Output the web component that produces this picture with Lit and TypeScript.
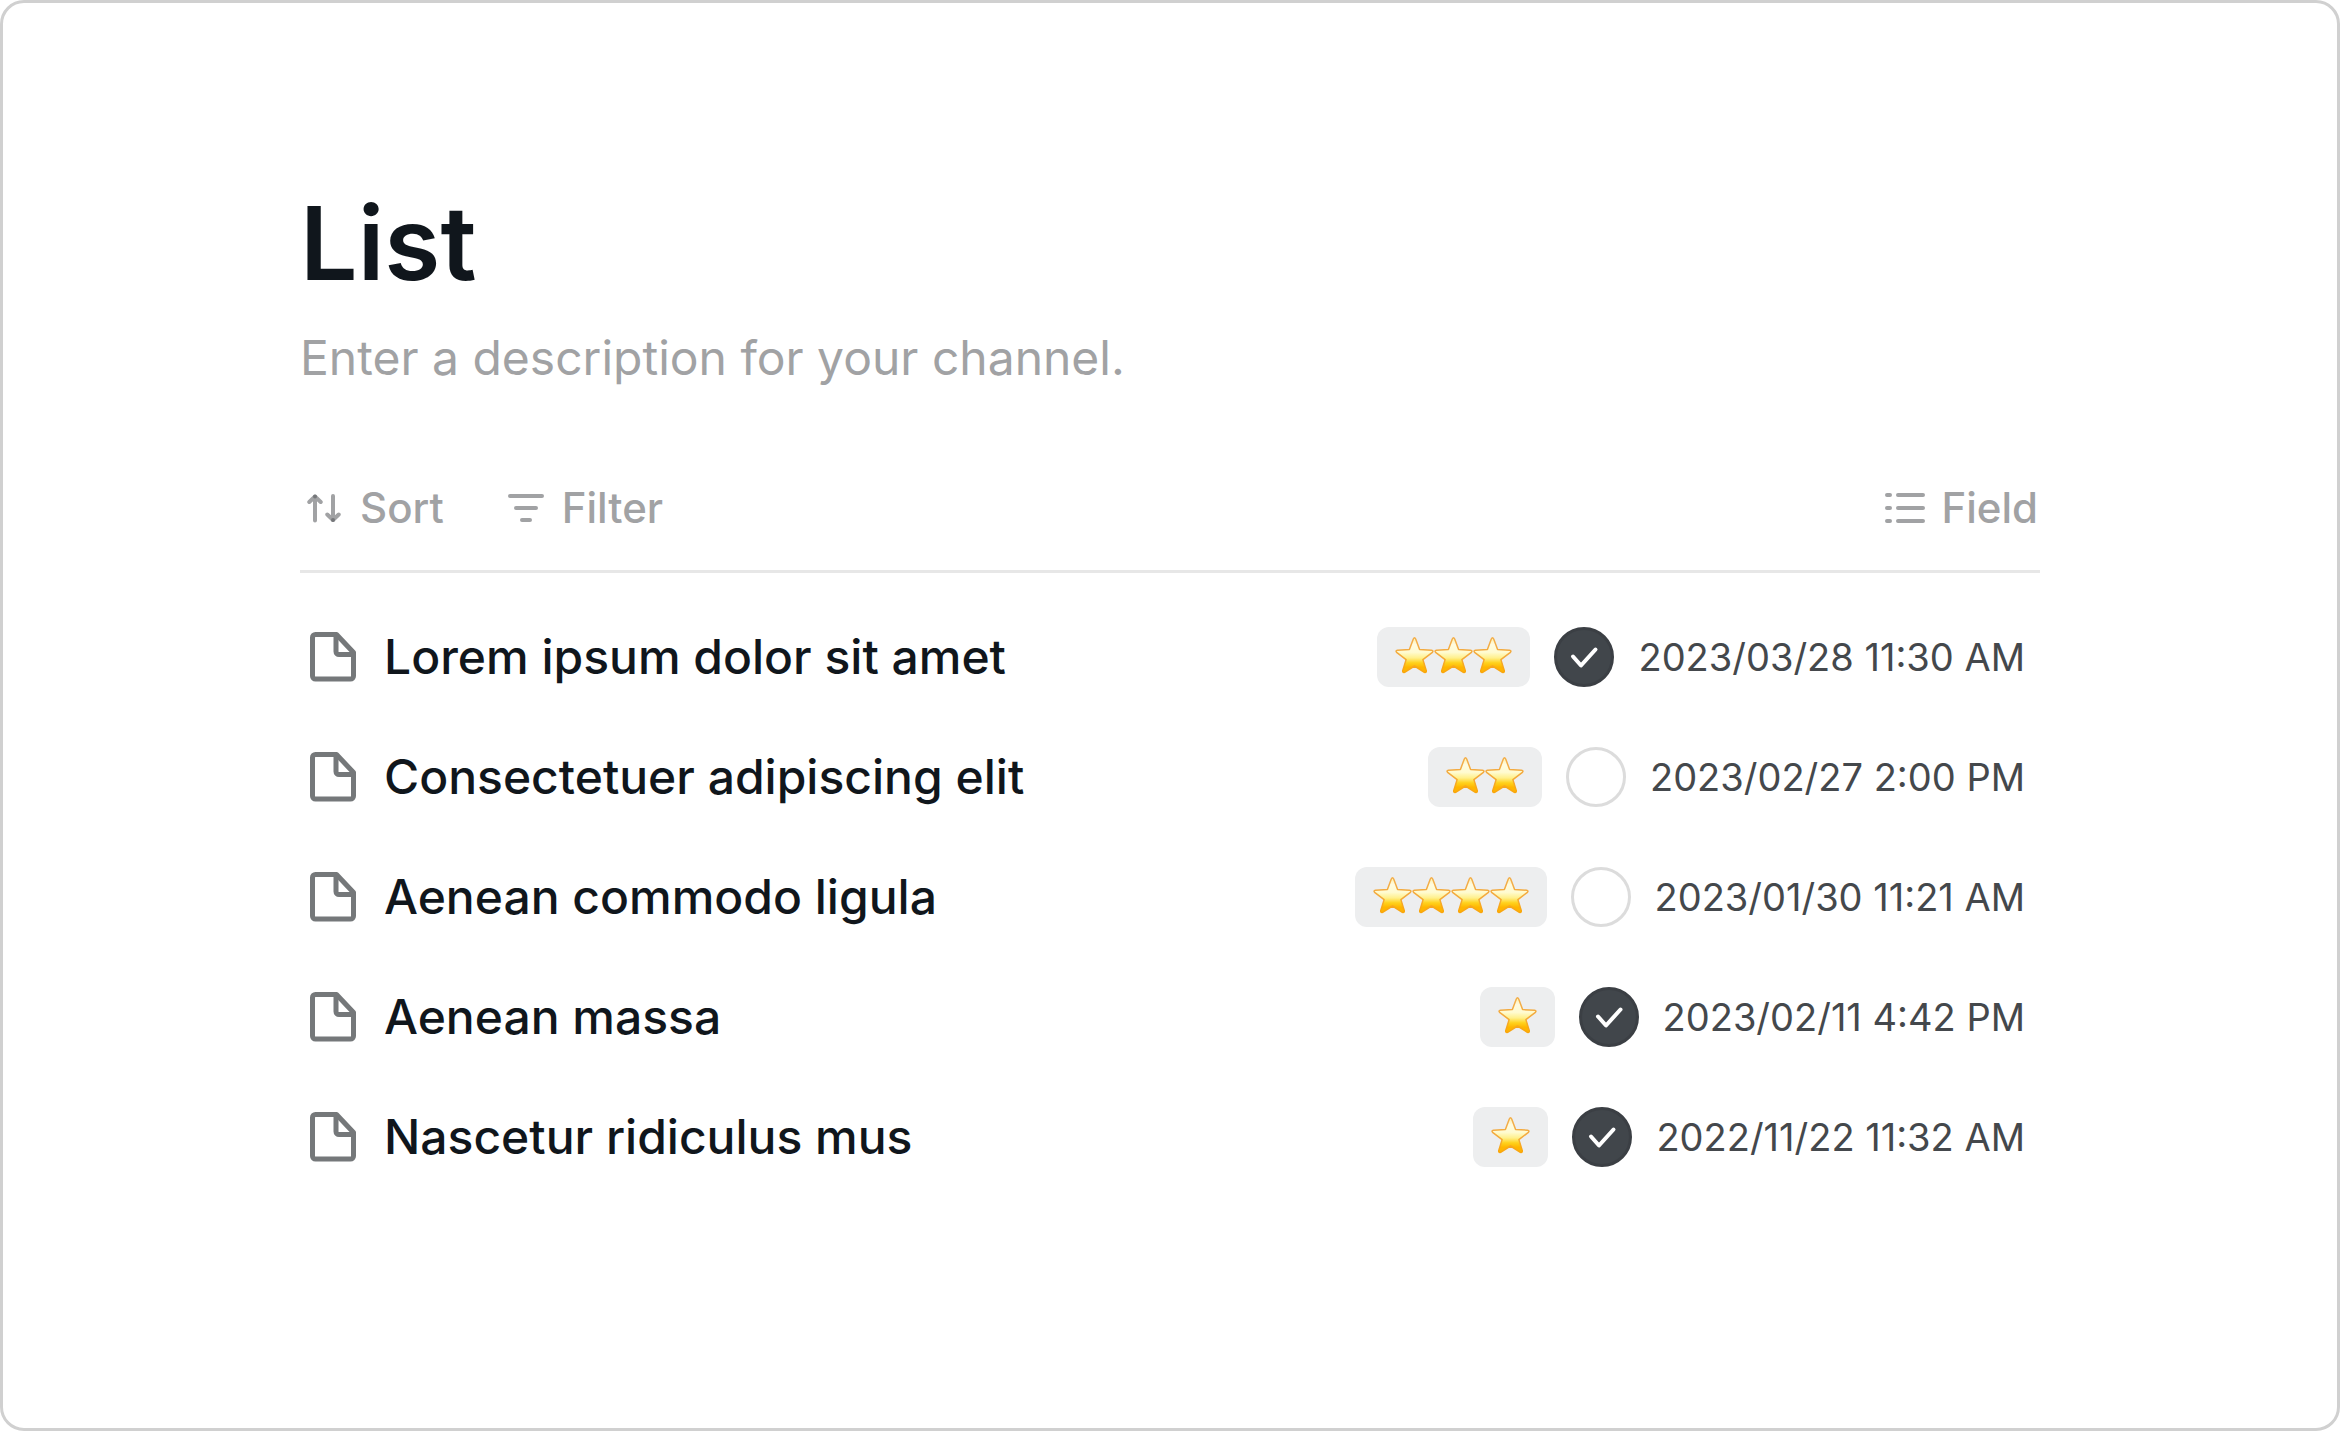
import { LitElement, html, css } from "lit";
import { customElement, property } from "lit/decorators.js";

interface Entry {
  title: string;
  stars: number;
  done: boolean;
  date: string;
}

const ENTRIES: Entry[] = [
  { title: "Lorem ipsum dolor sit amet", stars: 3, done: true, date: "2023/03/28 11:30 AM" },
  { title: "Consectetuer adipiscing elit", stars: 2, done: false, date: "2023/02/27 2:00 PM" },
  { title: "Aenean commodo ligula", stars: 4, done: false, date: "2023/01/30 11:21 AM" },
  { title: "Aenean massa", stars: 1, done: true, date: "2023/02/11 4:42 PM" },
  { title: "Nascetur ridiculus mus", stars: 1, done: true, date: "2022/11/22 11:32 AM" },
];

@customElement("star-rating")
export class StarRating extends LitElement {
  @property({ type: Number }) value = 0;

  static styles = css`
    :host {
      display: flex;
      align-items: center;
      height: 60px;
      padding: 0 18px;
      border-radius: 12px;
      background: #edeeef;
    }
    .star {
      display: block;
      width: 39px;
      height: 40px;
    }
  `;

  render() {
    return Array.from({ length: this.value }, () => html`
      <svg class="star" viewBox="0 0 39 40" aria-hidden="true">
        <defs>
          <linearGradient id="fill" x1="0" y1="0" x2="0" y2="1">
            <stop offset="0" stop-color="#fff0a8"></stop>
            <stop offset="0.2" stop-color="#fffbe0"></stop>
            <stop offset="0.42" stop-color="#fffbd0"></stop>
            <stop offset="0.58" stop-color="#fff08c"></stop>
            <stop offset="0.72" stop-color="#ffd21e"></stop>
            <stop offset="0.85" stop-color="#ffb600"></stop>
            <stop offset="1" stop-color="#ffb400"></stop>
          </linearGradient>
          <linearGradient id="edge" x1="0" y1="0" x2="0" y2="1">
            <stop offset="0" stop-color="#f2ae4c"></stop>
            <stop offset="0.5" stop-color="#f3aa3e"></stop>
            <stop offset="1" stop-color="#f9a60c"></stop>
          </linearGradient>
        </defs>
        <path
          d="M18.300 2 Q19.500 -0.400 20.700 2 L24.600 12.600 L36.600 13.200 Q38.800 13.700 37.400 15.300 L27.900 22.600 L31.300 33.700 Q31.500 36 29.400 35.300 L19.500 29 L9.600 35.300 Q7.500 36 7.700 33.700 L11.100 22.600 L1.600 15.300 Q0.200 13.700 2.400 13.200 L14.400 12.600 Z"
          fill="url(#fill)" stroke="url(#edge)" stroke-width="1.500" stroke-linejoin="round"/>
      </svg>`);
  }
}

@customElement("app-root")
export class AppRoot extends LitElement {
  static styles = css`
    :host {
      display: block;
      font-family: Inter, "Liberation Sans", sans-serif;
      color: #10161c;
      background: #fff;
    }
    * {
      box-sizing: border-box;
    }
    .frame {
      min-height: 100vh;
      padding: 180px 297px;
      border: 3px solid #d0d0d0;
      border-radius: 24px;
    }
    .title {
      margin: 0;
      font-size: 102px;
      line-height: 120px;
      font-weight: 600;
    }
    .description {
      margin: 19px 0 0;
      font-size: 48px;
      line-height: 72px;
      color: #a1a2a4;
    }
    .toolbar {
      display: flex;
      gap: 58px;
      margin-top: 78px;
      padding: 0 2px 26px 0;
      border-bottom: 3px solid #e7e7e7;
    }
    .tool {
      display: flex;
      align-items: center;
      gap: 12px;
      height: 72px;
      padding: 0;
      border: 0;
      background: none;
      font: 500 42px/60px Inter, "Liberation Sans", sans-serif;
      color: #a1a2a4;
    }
    .last {
      margin-left: auto;
    }
    .tool-icon {
      width: 48px;
      height: 48px;
      fill: none;
      stroke: #a1a2a4;
      stroke-width: 4;
      stroke-linecap: round;
      stroke-linejoin: round;
    }
    .tip {
      fill: #75777a;
      stroke: none;
    }
    .entries {
      margin: 24px 0 0;
      padding: 0;
      list-style: none;
    }
    .entry {
      display: flex;
      align-items: center;
      gap: 24px;
      height: 120px;
      padding: 0 15px 0 9px;
    }
    .file-icon {
      width: 51px;
      height: 50px;
      fill: none;
      stroke: #75787a;
      stroke-width: 5;
      stroke-linejoin: round;
    }
    .name {
      flex: 1;
      font-size: 48px;
      line-height: 60px;
      font-weight: 500;
    }
    .check {
      display: grid;
      width: 60px;
      height: 60px;
    }
    .box {
      grid-area: 1 / 1;
      appearance: none;
      margin: 0;
      border: 3px solid #dcdcdc;
      border-radius: 50%;
    }
    .box:checked {
      border-color: #3b3f44;
      background: #41464b;
    }
    .mark {
      grid-area: 1 / 1;
      z-index: 1;
      visibility: hidden;
      pointer-events: none;
      fill: none;
      stroke: #fff;
      stroke-width: 4;
      stroke-linecap: round;
      stroke-linejoin: round;
    }
    .box:checked + .mark {
      visibility: visible;
    }
    .date {
      font-size: 38px;
      line-height: 60px;
      color: #44484c;
    }
  `;

  render() {
    return html`
      <main class="frame">
        <h1 class="title">List</h1>
        <p class="description">Enter a description for your channel.</p>
        <div class="toolbar">
          <button class="tool" type="button">
            <svg class="tool-icon" viewBox="0 0 48 48" aria-hidden="true">
              <path d="M15 36.500V12.500M9.300 18l5.700-5.500 5.700 5.500M33 12v24M27.300 30.500l5.700 5.500 5.700-5.500"/>
              <circle class="tip" cx="15" cy="12.500" r="2"/>
              <circle class="tip" cx="33" cy="36" r="2"/>
            </svg>
            Sort
          </button>
          <button class="tool" type="button">
            <svg class="tool-icon" viewBox="0 0 48 48" aria-hidden="true">
              <path d="M8 12h32M14 24h20M20 36h8"/>
            </svg>
            Filter
          </button>
          <button class="tool last" type="button">
            <svg class="tool-icon" viewBox="0 0 48 48" aria-hidden="true">
              <path d="M6 11h3M6 24h3M6 37h3M17 11h25M17 24h25M17 37h25"/>
            </svg>
            Field
          </button>
        </div>
        <ul class="entries">
          ${ENTRIES.map((entry) => html`
            <li class="entry">
              <svg class="file-icon" viewBox="0 0 51 50" aria-hidden="true">
                <path d="M6.500 2.500H27.500L44.500 20.500V44a3 3 0 0 1-3 3h-35a3 3 0 0 1-3-3V5.500a3 3 0 0 1 3-3z"/>
                <path d="M27 3V19.500a3 3 0 0 0 3 3H44"/>
              </svg>
              <span class="name">${entry.title}</span>
              <star-rating .value=${entry.stars}></star-rating>
              <label class="check">
                <input class="box" type="checkbox" aria-label=${entry.title} .checked=${entry.done}>
                <svg class="mark" viewBox="0 0 60 60" aria-hidden="true">
                  <path d="M19 29.500l8 9L41.500 22.500"/>
                </svg>
              </label>
              <time class="date">${entry.date}</time>
            </li>`)}
        </ul>
      </main>
    `;
  }
}
